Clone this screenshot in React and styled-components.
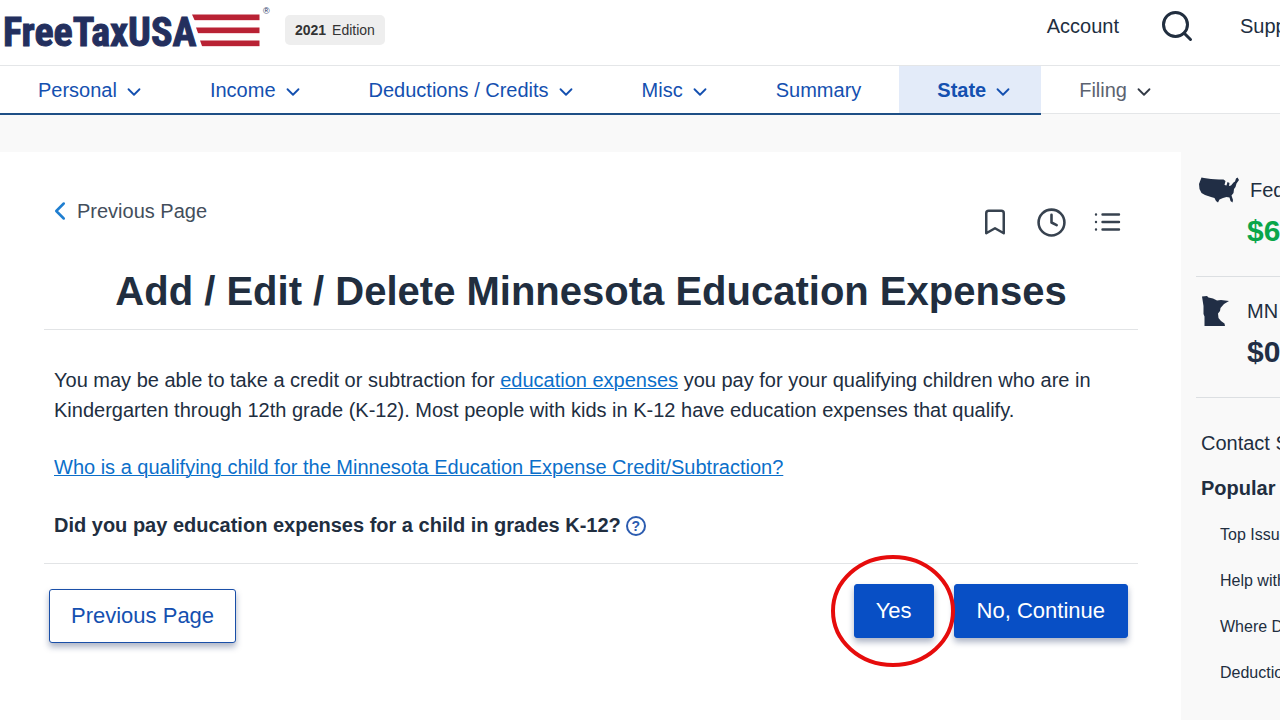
import React from "react";
import styled, { createGlobalStyle } from "styled-components";
import { Bookmark, ChevronDown, ChevronLeft, Clock, Search } from "lucide-react";

const menu = [
    { label: "Personal", hasMenu: true },
    { label: "Income", hasMenu: true },
    { label: "Deductions / Credits", hasMenu: true },
    { label: "Misc", hasMenu: true },
    { label: "Summary" },
    { label: "State", hasMenu: true, active: true },
    { label: "Filing", hasMenu: true, muted: true },
];

const topics = ["Top Issues", "Help with", "Where Do", "Deductions"];

const Logo = () => (
    <LogoSvg viewBox="0 0 272 60" role="img" aria-label="FreeTaxUSA">
        <LogoText x="3" y="46">FreeTaxUSA</LogoText>
        <path fill="#b92234" d="M192 14.500H259.500V20H194.500ZM196 27.500H259.500V33H198ZM200 40.500H259.500V46H202Z" />
        <path fill="#f6d8dc" d="M194.500 20H259.500V21H195ZM198 33H259.500V34H198.500ZM202 46H259.500V47H202.500Z" />
        <RegMark x="263" y="14">®</RegMark>
    </LogoSvg>
);

const UsaIcon = () => (
    <MapIcon viewBox="0 0 40 26" aria-hidden="true">
        <path d="M2.500 0.500L5 1L12 2L20 2.500L24.500 2.500L26.500 4L25.500 8L27.500 8.500L28.500 5L30.500 6L30 9L32 8.500L34.500 5.500L36 4.500L37 1.500L38.500 0.500L40 3L37.500 6.500L36.500 10L35 12L34.500 16L32.500 18.500L34 23L33.500 25.500L31.500 24L30.500 20.500L27.500 20L24 21L20.500 22.500L19 25.500L17 24L15.500 21L12 20L6 18L2.500 16L0.500 12L0 7Z" />
    </MapIcon>
);

const MinnesotaIcon = () => (
    <MapIcon viewBox="0 0 40 30" aria-hidden="true">
        <path d="M3 0.500L8 0L9.500 1.500L14 2.500L18 4.500L22 4L30 5L25 8L21.500 12L21 15L19 17.500L19.500 22L22 25L25.500 27.500L26 30H5.500V20.500L4.500 18V10Z" />
    </MapIcon>
);

const App = () => {
    return (
        <Page>
            <GlobalStyle />
            <Header>
                <Logo />
                <Edition><b>2021</b> Edition</Edition>
                <HeaderLinks>
                    <HeaderLink href="#account">Account</HeaderLink>
                    <IconButton aria-label="Search"><Search size={36} strokeWidth={2} /></IconButton>
                    <HeaderLink href="#support">Support</HeaderLink>
                </HeaderLinks>
            </Header>
            <Nav>
                <NavList>
                    {menu.map(({ label, hasMenu, active, muted }) => (
                        <NavItem key={label} href="#nav" $hasMenu={hasMenu} $active={active} $muted={muted}>
                            {label}
                            {hasMenu && <NavArrow size={22} strokeWidth={2} />}
                        </NavItem>
                    ))}
                </NavList>
            </Nav>
            <Content>
                <Main>
                    <Tools>
                        <BackLink href="#previous"><BackArrow size={30} />Previous Page</BackLink>
                        <ToolIcons>
                            <IconButton aria-label="Bookmark"><Bookmark size={30} /></IconButton>
                            <IconButton aria-label="History"><Clock size={31} /></IconButton>
                            <IconButton aria-label="Contents">
                                <svg width="28" height="28" viewBox="0 0 28 28" fill="none" stroke="currentColor" strokeWidth="2.400" strokeLinecap="round">
                                    <path d="M9.500 6.500H26M9.500 14H26M9.500 21.500H26M3 6.500h.01M3 14h.01M3 21.500h.01" />
                                </svg>
                            </IconButton>
                        </ToolIcons>
                    </Tools>
                    <Title>Add / Edit / Delete Minnesota Education Expenses</Title>
                    <Body>
                        <p>
                            You may be able to take a credit or subtraction for <a href="#expenses">education expenses</a> you pay for your qualifying children who are in Kindergarten through 12th grade (K-12). Most people with kids in K-12 have education expenses that qualify.
                        </p>
                        <p><a href="#child">Who is a qualifying child for the Minnesota Education Expense Credit/Subtraction?</a></p>
                        <Question>
                            Did you pay education expenses for a child in grades K-12?
                            <HelpButton aria-label="Help">?</HelpButton>
                        </Question>
                    </Body>
                    <Actions>
                        <PreviousButton $compact>Previous Page</PreviousButton>
                        <Answers>
                            <Highlighted>
                                <Button $compact>Yes</Button>
                                <Ring viewBox="0 0 124 112" aria-hidden="true">
                                    <ellipse cx="62" cy="56" rx="60" ry="54" />
                                </Ring>
                            </Highlighted>
                            <Button>No, Continue</Button>
                        </Answers>
                    </Actions>
                </Main>
                <Sidebar>
                    <Refund>
                        <UsaIcon />
                        <RefundLabel $wide>Federal</RefundLabel>
                        <Amount $positive>$6</Amount>
                    </Refund>
                    <Refund>
                        <MinnesotaIcon />
                        <RefundLabel>MN</RefundLabel>
                        <Amount>$0</Amount>
                    </Refund>
                    <Support>
                        <SideLink href="#contact">Contact Support</SideLink>
                        <SideTitle>Popular</SideTitle>
                        <Topics>
                            {topics.map((topic) => (
                                <li key={topic}><a href="#topic">{topic}</a></li>
                            ))}
                        </Topics>
                    </Support>
                </Sidebar>
            </Content>
        </Page>
    );
};

const GlobalStyle = createGlobalStyle`
    * {
        box-sizing: border-box;
    }

    body {
        margin: 0;
        background: #f9f9f9;
        color: #212e3f;
        font-family: "Liberation Sans", Arial, sans-serif;
        font-size: 20px;
    }

    a {
        color: inherit;
        text-decoration: none;
    }

    button {
        font: inherit;
        cursor: pointer;
    }
`;

const Page = styled.div`
    min-height: 100vh;
    display: flex;
    flex-direction: column;
    overflow: hidden;
`;

const Header = styled.header`
    height: 66px;
    display: flex;
    align-items: flex-start;
    background: #fff;
    border-bottom: 1px solid #e4e6e8;
`;

const LogoSvg = styled.svg`
    width: 272px;
    height: 60px;
    flex-shrink: 0;
`;

const LogoText = styled.text`
    font: bold 40px "Roboto Condensed", Roboto, sans-serif;
    fill: #232f5e;
    stroke: #232f5e;
    stroke-width: 1px;
`;

const RegMark = styled.text`
    font-size: 9px;
    fill: #232f5e;
`;

const Edition = styled.span`
    height: 30px;
    margin: 15px 0 0 13px;
    padding: 0 10px;
    border-radius: 5px;
    background: #eee;
    color: #333;
    font-size: 14px;
    line-height: 30px;
    white-space: nowrap;

    b {
        margin-right: 2px;
    }
`;

const HeaderLinks = styled.div`
    height: 52px;
    margin-left: auto;
    display: flex;
    align-items: center;
    gap: 40px;
`;

const HeaderLink = styled.a`
    white-space: nowrap;

    &:last-child {
        width: 40px;
        margin-left: 5px;
    }
`;

const IconButton = styled.button`
    display: flex;
    padding: 0;
    border: 0;
    background: none;
    color: inherit;
`;

const Nav = styled.nav`
    height: 49px;
    background: linear-gradient(#fff 47px, #e4e6e8 47px, #e4e6e8 48px, #f9f9f9 48px);
`;

const NavList = styled.div`
    height: 49px;
    display: flex;
`;

const NavItem = styled.a`
    display: flex;
    align-items: center;
    padding: 2px ${({ $hasMenu }) => ($hasMenu ? "27px" : "38px")} 0 38px;
    border-bottom: 2px solid ${({ $muted }) => ($muted ? "transparent" : "#1e4f86")};
    background: ${({ $active }) => ($active ? "#e3ebf9" : "transparent")};
    color: ${({ $muted }) => ($muted ? "#5c6370" : "#1450b0")};
    font-weight: ${({ $active }) => ($active ? "bold" : "normal")};
    white-space: nowrap;

    svg {
        color: ${({ $muted }) => ($muted ? "#333a46" : "#1450b0")};
    }
`;

const NavArrow = styled(ChevronDown)`
    margin: 3px 0 0 6px;
`;

const Content = styled.div`
    flex: 1;
    display: flex;
    padding-top: 37px;
`;

const Main = styled.main`
    flex: 1;
    min-width: 0;
    padding: 44px 43px 0 44px;
    background: #fff;
`;

const Tools = styled.div`
    height: 60px;
    display: flex;
    justify-content: space-between;
    align-items: flex-start;
    padding-right: 17px;
`;

const BackLink = styled.a`
    display: flex;
    align-items: center;
    height: 30px;
    padding-left: 1px;
    color: #434e5b;
`;

const BackArrow = styled(ChevronLeft)`
    margin-right: 2px;
    color: #1f7ed0;
`;

const ToolIcons = styled.div`
    height: 52px;
    display: flex;
    align-items: center;
    gap: 26px;
    color: #37424f;
`;

const Title = styled.h1`
    margin: 0;
    padding: 10px 0 13px;
    border-bottom: 1px solid #e2e4e6;
    font-size: 40px;
    line-height: 50px;
    text-align: center;
`;

const Body = styled.div`
    padding: 35px 10px 22px;
    border-bottom: 1px solid #e2e4e6;
    line-height: 30px;

    p {
        margin: 0 0 27px;
    }

    a {
        color: #0b6fca;
        text-decoration: underline;
        text-decoration-thickness: 1px;
    }
`;

const Question = styled.div`
    display: flex;
    align-items: center;
    min-height: 32px;
    font-weight: bold;
`;

const HelpButton = styled.button`
    width: 20px;
    height: 20px;
    margin: 2px 0 0 5px;
    padding: 0;
    border: 2px solid #2c5cb0;
    border-radius: 50%;
    background: none;
    color: #2c5cb0;
    font-size: 14px;
    line-height: 16px;
`;

const Actions = styled.div`
    display: flex;
    justify-content: space-between;
    align-items: flex-start;
    padding: 20px 10px 0 5px;
`;

const Answers = styled.div`
    display: flex;
    gap: 20px;
`;

const Button = styled.button`
    height: 54px;
    padding: 0 ${({ $compact }) => ($compact ? "21px" : "22px")};
    border: 1px solid #084fc5;
    border-radius: 3px;
    background: #084fc5;
    box-shadow: 0 4px 6px rgba(20, 40, 90, 0.35);
    color: #fff;
    font-size: 22px;
    white-space: nowrap;
`;

const PreviousButton = styled(Button)`
    margin-top: 5px;
    background: #fff;
    border-color: #1a4fa8;
    color: #1450b0;
`;

const Highlighted = styled.div`
    position: relative;
`;

const Ring = styled.svg`
    position: absolute;
    top: -29px;
    left: -23px;
    width: 124px;
    height: 112px;
    fill: none;
    stroke: #e60c0c;
    stroke-width: 4;
    pointer-events: none;
`;

const Sidebar = styled.aside`
    width: 99px;
    padding: 4px 0 0 15px;
    overflow: hidden;
    white-space: nowrap;
`;

const Refund = styled.section`
    height: 121px;
    display: grid;
    grid-template-columns: 43px auto;
    grid-template-rows: 34px 48px;
    align-items: center;
    padding: 17px 0 0 3px;
    border-bottom: 1px solid #dcdfe2;
`;

const MapIcon = styled.svg`
    width: 40px;
    height: 30px;
    fill: #212e45;
`;

const RefundLabel = styled.span`
    padding-left: ${({ $wide }) => ($wide ? "8px" : "5px")};
`;

const Amount = styled.strong`
    grid-column: 2;
    padding-left: 5px;
    color: ${({ $positive }) => ($positive ? "#0aa64a" : "#212e45")};
    font-size: 30px;
`;

const Support = styled.section`
    padding: 30px 0 0 5px;
    line-height: 30px;
`;

const SideLink = styled.a`
    display: block;
`;

const SideTitle = styled.h2`
    margin: 15px 0 0;
    font-size: 20px;
    line-height: 30px;
`;

const Topics = styled.ul`
    margin: 9px 0 0;
    padding: 0 0 0 19px;
    list-style: none;
    font-size: 16px;
    line-height: 46px;
`;

export default App;
